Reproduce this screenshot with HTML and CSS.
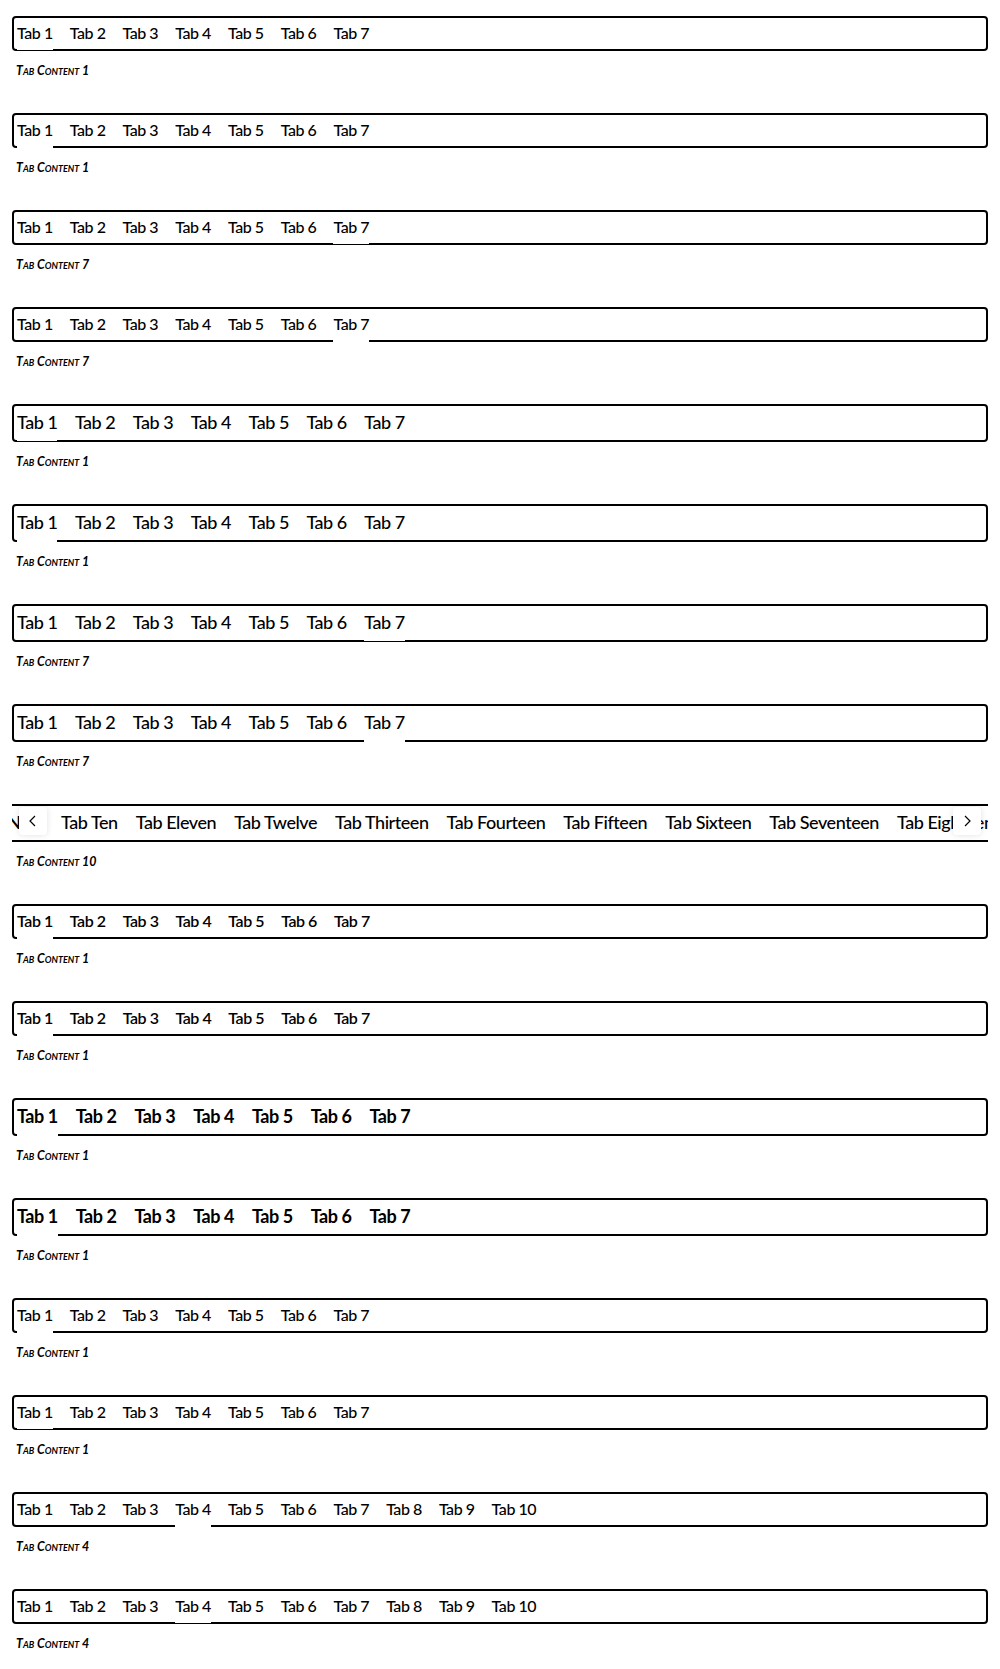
FILE: index.html
```html
<!DOCTYPE html>
<html lang="en">
<head>
<meta charset="utf-8">
<title>Tabs</title>
<link rel="stylesheet" href="styles.css">
</head>
<body>
<main class="page">
  <section class="demo">
    <div class="tabs tabs--small ind-half">
      <span class="tab is-active">Tab 1</span><span class="tab">Tab 2</span><span class="tab">Tab 3</span><span class="tab">Tab 4</span><span class="tab">Tab 5</span><span class="tab">Tab 6</span><span class="tab">Tab 7</span>
    </div>
    <p class="content">Tab Content 1</p>
  </section>
  <section class="demo">
    <div class="tabs tabs--small ind-full">
      <span class="tab is-active">Tab 1</span><span class="tab">Tab 2</span><span class="tab">Tab 3</span><span class="tab">Tab 4</span><span class="tab">Tab 5</span><span class="tab">Tab 6</span><span class="tab">Tab 7</span>
    </div>
    <p class="content">Tab Content 1</p>
  </section>
  <section class="demo">
    <div class="tabs tabs--small ind-half">
      <span class="tab">Tab 1</span><span class="tab">Tab 2</span><span class="tab">Tab 3</span><span class="tab">Tab 4</span><span class="tab">Tab 5</span><span class="tab">Tab 6</span><span class="tab is-active">Tab 7</span>
    </div>
    <p class="content">Tab Content 7</p>
  </section>
  <section class="demo">
    <div class="tabs tabs--small ind-full">
      <span class="tab">Tab 1</span><span class="tab">Tab 2</span><span class="tab">Tab 3</span><span class="tab">Tab 4</span><span class="tab">Tab 5</span><span class="tab">Tab 6</span><span class="tab is-active">Tab 7</span>
    </div>
    <p class="content">Tab Content 7</p>
  </section>
  <section class="demo">
    <div class="tabs tabs--medium ind-half">
      <span class="tab is-active">Tab 1</span><span class="tab">Tab 2</span><span class="tab">Tab 3</span><span class="tab">Tab 4</span><span class="tab">Tab 5</span><span class="tab">Tab 6</span><span class="tab">Tab 7</span>
    </div>
    <p class="content">Tab Content 1</p>
  </section>
  <section class="demo">
    <div class="tabs tabs--medium ind-full">
      <span class="tab is-active">Tab 1</span><span class="tab">Tab 2</span><span class="tab">Tab 3</span><span class="tab">Tab 4</span><span class="tab">Tab 5</span><span class="tab">Tab 6</span><span class="tab">Tab 7</span>
    </div>
    <p class="content">Tab Content 1</p>
  </section>
  <section class="demo">
    <div class="tabs tabs--medium ind-half">
      <span class="tab">Tab 1</span><span class="tab">Tab 2</span><span class="tab">Tab 3</span><span class="tab">Tab 4</span><span class="tab">Tab 5</span><span class="tab">Tab 6</span><span class="tab is-active">Tab 7</span>
    </div>
    <p class="content">Tab Content 7</p>
  </section>
  <section class="demo">
    <div class="tabs tabs--medium ind-full">
      <span class="tab">Tab 1</span><span class="tab">Tab 2</span><span class="tab">Tab 3</span><span class="tab">Tab 4</span><span class="tab">Tab 5</span><span class="tab">Tab 6</span><span class="tab is-active">Tab 7</span>
    </div>
    <p class="content">Tab Content 7</p>
  </section>
  <section class="demo demo--scroll">
    <div class="tabs tabs--medium tabs--scroll ind-full">
      <div class="scroll-track" style="transform: translateX(-702px)">
        <span class="tab">Tab One</span><span class="tab">Tab Two</span><span class="tab">Tab Three</span><span class="tab">Tab Four</span><span class="tab">Tab Five</span><span class="tab">Tab Six</span><span class="tab">Tab Seven</span><span class="tab">Tab Eight</span><span class="tab">Tab Nine</span><span class="tab is-active">Tab Ten</span><span class="tab">Tab Eleven</span><span class="tab">Tab Twelve</span><span class="tab">Tab Thirteen</span><span class="tab">Tab Fourteen</span><span class="tab">Tab Fifteen</span><span class="tab">Tab Sixteen</span><span class="tab">Tab Seventeen</span><span class="tab">Tab Eighteen</span><span class="tab">Tab Nineteen</span><span class="tab">Tab Twenty</span>
      </div>
      <span class="scroll-btn scroll-btn--prev"><svg viewBox="0 0 16 16" width="16" height="16"><path d="M10 3 L5 8 L10 13" fill="none" stroke="#000" stroke-width="1.2"/></svg></span>
      <span class="scroll-btn scroll-btn--next"><svg viewBox="0 0 16 16" width="16" height="16"><path d="M6 3 L11 8 L6 13" fill="none" stroke="#000" stroke-width="1.2"/></svg></span>
    </div>
    <p class="content">Tab Content 10</p>
  </section>
  <section class="demo">
    <div class="tabs tabs--small tabs--semibold ind-full">
      <span class="tab is-active">Tab 1</span><span class="tab">Tab 2</span><span class="tab">Tab 3</span><span class="tab">Tab 4</span><span class="tab">Tab 5</span><span class="tab">Tab 6</span><span class="tab">Tab 7</span>
    </div>
    <p class="content">Tab Content 1</p>
  </section>
  <section class="demo">
    <div class="tabs tabs--small tabs--semibold ind-full">
      <span class="tab is-active">Tab 1</span><span class="tab">Tab 2</span><span class="tab">Tab 3</span><span class="tab">Tab 4</span><span class="tab">Tab 5</span><span class="tab">Tab 6</span><span class="tab">Tab 7</span>
    </div>
    <p class="content">Tab Content 1</p>
  </section>
  <section class="demo">
    <div class="tabs tabs--medium tabs--bold ind-full">
      <span class="tab is-active">Tab 1</span><span class="tab">Tab 2</span><span class="tab">Tab 3</span><span class="tab">Tab 4</span><span class="tab">Tab 5</span><span class="tab">Tab 6</span><span class="tab">Tab 7</span>
    </div>
    <p class="content">Tab Content 1</p>
  </section>
  <section class="demo">
    <div class="tabs tabs--medium tabs--bold ind-full">
      <span class="tab is-active">Tab 1</span><span class="tab">Tab 2</span><span class="tab">Tab 3</span><span class="tab">Tab 4</span><span class="tab">Tab 5</span><span class="tab">Tab 6</span><span class="tab">Tab 7</span>
    </div>
    <p class="content">Tab Content 1</p>
  </section>
  <section class="demo">
    <div class="tabs tabs--small ind-full">
      <span class="tab is-active">Tab 1</span><span class="tab">Tab 2</span><span class="tab">Tab 3</span><span class="tab">Tab 4</span><span class="tab">Tab 5</span><span class="tab">Tab 6</span><span class="tab">Tab 7</span>
    </div>
    <p class="content">Tab Content 1</p>
  </section>
  <section class="demo">
    <div class="tabs tabs--small ind-half">
      <span class="tab is-active">Tab 1</span><span class="tab">Tab 2</span><span class="tab">Tab 3</span><span class="tab">Tab 4</span><span class="tab">Tab 5</span><span class="tab">Tab 6</span><span class="tab">Tab 7</span>
    </div>
    <p class="content">Tab Content 1</p>
  </section>
  <section class="demo">
    <div class="tabs tabs--small ind-full">
      <span class="tab">Tab 1</span><span class="tab">Tab 2</span><span class="tab">Tab 3</span><span class="tab is-active">Tab 4</span><span class="tab">Tab 5</span><span class="tab">Tab 6</span><span class="tab">Tab 7</span><span class="tab">Tab 8</span><span class="tab">Tab 9</span><span class="tab">Tab 10</span>
    </div>
    <p class="content">Tab Content 4</p>
  </section>
  <section class="demo">
    <div class="tabs tabs--small ind-half">
      <span class="tab">Tab 1</span><span class="tab">Tab 2</span><span class="tab">Tab 3</span><span class="tab is-active">Tab 4</span><span class="tab">Tab 5</span><span class="tab">Tab 6</span><span class="tab">Tab 7</span><span class="tab">Tab 8</span><span class="tab">Tab 9</span><span class="tab">Tab 10</span>
    </div>
    <p class="content">Tab Content 4</p>
  </section>
</main>
</body>
</html>
```

FILE: styles.css
```css
* { box-sizing: border-box; }

body {
  margin: 0;
  background: #fff;
  color: #000;
  font-family: Lato, "Liberation Sans", Arial, sans-serif;
}

.page {
  padding: 16px 12px;
  display: flex;
  flex-direction: column;
  gap: 35px;
}

.tabs {
  display: flex;
  align-items: center;
  gap: 17px;
  border: 2px solid #000;
  border-radius: 4px;
  padding: 0 3px;
  height: 35px;
}

.tabs--medium {
  height: 38px;
  gap: 17.4px;
}

.tabs--medium.tabs--bold {
  gap: 18px;
}

.tab {
  position: relative;
  display: flex;
  align-items: center;
  height: 100%;
  padding-bottom: 3px;
  font-size: 16px;
  font-weight: 500;
  letter-spacing: -0.45px;
  white-space: nowrap;
}

.tabs--medium .tab { font-size: 18px; }

.tabs--semibold .tab { font-weight: 600; }
.tabs--bold .tab { font-weight: 700; }

.tab.is-active::after {
  content: "";
  position: absolute;
  left: 0;
  right: 0;
  background: #fff;
}

.ind-full .tab.is-active::after {
  bottom: -2px;
  height: 2px;
}

.ind-half .tab.is-active::after {
  bottom: -1px;
  height: 1px;
}

.tabs--scroll {
  position: relative;
  border-left: 0;
  border-right: 0;
  border-radius: 0;
  padding: 0;
  overflow: hidden;
}

.tabs--scroll .tab { padding-bottom: 2px; }

.scroll-track {
  display: flex;
  align-items: center;
  gap: 18px;
  height: 100%;
}

.scroll-btn {
  position: absolute;
  top: 1px;
  width: 28px;
  height: 28px;
  display: flex;
  align-items: center;
  justify-content: center;
  background: #fff;
  border-radius: 4px;
  box-shadow: 0 0 6px rgba(0, 0, 0, 0.12);
}

.scroll-btn--prev { left: 7px; }
.scroll-btn--next { right: 7px; }

.content {
  margin: 13px 0 0 4px;
  font-size: 12.4px;
  line-height: 14px;
  font-weight: 700;
  font-style: italic;
  font-variant: small-caps;
}
```
